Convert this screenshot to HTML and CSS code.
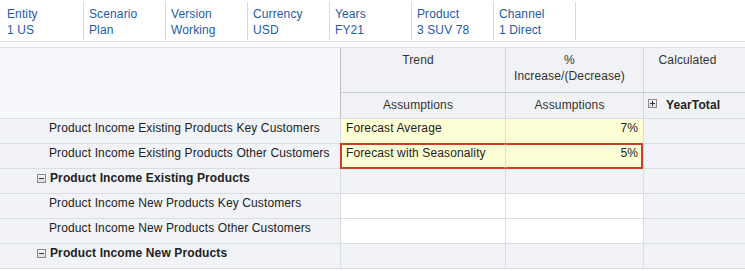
FILE: index.html
```html
<!DOCTYPE html>
<html>
<head>
<meta charset="utf-8">
<link rel="stylesheet" href="styles.css">
</head>
<body>
<div class="pov">
  <div class="pov-item"><div>Entity</div><div>1 US</div></div>
  <div class="pov-item"><div>Scenario</div><div>Plan</div></div>
  <div class="pov-item"><div>Version</div><div>Working</div></div>
  <div class="pov-item"><div>Currency</div><div>USD</div></div>
  <div class="pov-item"><div>Years</div><div>FY21</div></div>
  <div class="pov-item"><div>Product</div><div>3 SUV 78</div></div>
  <div class="pov-item"><div>Channel</div><div>1 Direct</div></div>
</div>
<div class="grid">
  <div class="corner"></div>
  <div class="hcell h1 first">Trend</div>
  <div class="hcell h1">%<br>Increase/(Decrease)</div>
  <div class="hcell h1 last">Calculated</div>
  <div class="hcell h2 first">Assumptions</div>
  <div class="hcell h2">Assumptions</div>
  <div class="hcell h2 last yt"><span class="box plus"></span><b>YearTotal</b></div>

  <div class="lab">Product Income Existing Products Key Customers</div>
  <div class="cell yel">Forecast Average</div>
  <div class="cell yel num">7%</div>
  <div class="cell"></div>

  <div class="lab">Product Income Existing Products Other Customers</div>
  <div class="cell yel sel-l">Forecast with Seasonality</div>
  <div class="cell yel num sel-r">5%</div>
  <div class="cell"></div>

  <div class="lab bold"><span class="box minus"></span>Product Income Existing Products</div>
  <div class="cell"></div>
  <div class="cell"></div>
  <div class="cell"></div>

  <div class="lab">Product Income New Products Key Customers</div>
  <div class="cell wht"></div>
  <div class="cell wht"></div>
  <div class="cell"></div>

  <div class="lab">Product Income New Products Other Customers</div>
  <div class="cell wht"></div>
  <div class="cell wht"></div>
  <div class="cell"></div>

  <div class="lab bold"><span class="box minus"></span>Product Income New Products</div>
  <div class="cell"></div>
  <div class="cell"></div>
  <div class="cell"></div>
</div>
</body>
</html>
```
FILE: styles.css
```css
* { box-sizing: border-box; }
html, body { margin: 0; padding: 0; background: #fff; }
body {
  width: 745px;
  height: 271px;
  overflow: hidden;
  font-family: "Liberation Sans", Arial, sans-serif;
  font-size: 12px;
  letter-spacing: 0.12px;
  color: #222;
}
.pov {
  display: flex;
  height: 42px;
  border-bottom: 1px solid #d6dde6;
  padding: 2px 0 0 2px;
}
.pov-item {
  width: 82px;
  height: 38px;
  border-right: 1px solid #d3dae3;
  padding: 4px 0 0 5px;
  color: #1f5aa6;
  line-height: 16px;
}
.grid {
  margin-top: 5px;
  display: grid;
  grid-template-columns: 340px 165px 138px 102px;
  grid-template-rows: 45px 26px repeat(6, 25px);
  border-top: 1px solid #d6dde6;
}
.corner {
  grid-row: 1 / span 2;
  background: #f7f8fb;
  border-bottom: 1px solid #d6dde6;
}
.hcell {
  background: #f1f2f5;
  color: #333;
  text-align: center;
  border-left: 1px solid #d3d7dd;
  border-bottom: 1px solid #c9cdd2;
  line-height: 16px;
}
.hcell.first { border-left-color: #bdbdbd; }
.h1 { padding: 4px 10px 0 0; }
.h1.last { padding-right: 14px; }
.h2 {
  padding: 4px 10px 0 0;
  border-bottom-color: #d6dde6;
}
.yt {
  text-align: left;
  padding-left: 4px;
  display: flex;
  align-items: flex-start;
  gap: 9px;
}
.yt b { color: #222; }
.box {
  display: inline-block;
  width: 9px;
  height: 9px;
  border: 1px solid #8a8a8a;
  background: linear-gradient(#fafafa, #dcdcdc);
  position: relative;
  flex: none;
}
.box::before {
  content: "";
  position: absolute;
  left: 1px;
  right: 1px;
  top: 3px;
  height: 1px;
  background: #333;
}
.plus::after {
  content: "";
  position: absolute;
  top: 1px;
  bottom: 1px;
  left: 3px;
  width: 1px;
  background: #333;
}
.yt .box { margin-top: 2px; }
.lab {
  background: #f1f3f7;
  border-bottom: 1px solid #d8dde4;
  padding: 2px 0 0 49px;
  line-height: 14px;
  white-space: nowrap;
}
.lab.bold {
  font-weight: bold;
  padding-left: 37px;
  display: flex;
  align-items: flex-start;
  gap: 4px;
}
.lab.bold .box { margin-top: 3px; }
.cell {
  background: #f1f3f7;
  border-left: 1px solid #d8dde4;
  border-bottom: 1px solid #d8dde4;
  padding: 2px 5px 0 5px;
  line-height: 14px;
  white-space: nowrap;
}
.yel { background: #ffffd5; }
.wht { background: #fff; }
.num { text-align: right; }
.sel-l {
  border-top: 2px solid #c8412b;
  border-left: 2px solid #c8412b;
  border-bottom: 2px solid #c8412b;
  margin-top: -1px;
  padding-top: 1px;
  padding-left: 4px;
}
.sel-r {
  border-top: 2px solid #c8412b;
  border-right: 2px solid #c8412b;
  border-bottom: 2px solid #c8412b;
  margin-top: -1px;
  padding-top: 1px;
  padding-right: 3px;
}
```
